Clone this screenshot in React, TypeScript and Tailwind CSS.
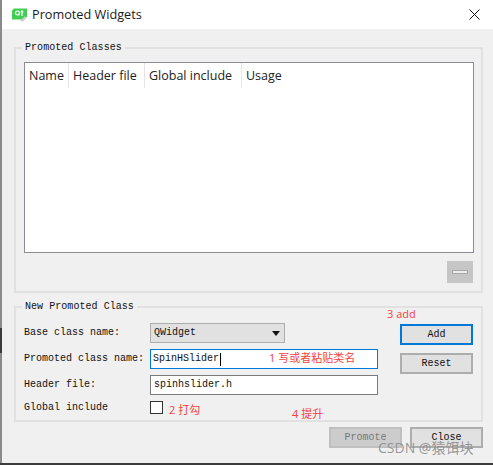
const mono = "font-['Liberation_Mono',monospace] text-[10px] leading-none text-[#111]";
const ui = "font-['Open_Sans','Noto_Sans_CJK_SC',sans-serif]";
const note = `${ui} absolute whitespace-nowrap text-[11px] leading-none text-[#f43f3f]`;

const labelClass = `${mono} w-[126px] shrink-0 text-[10px]`;

function Group({
  title,
  className,
  children,
}: {
  title: string;
  className: string;
  children: React.ReactNode;
}) {
  return (
    <fieldset className={`ml-[14px] mr-[10px] border-2 border-[#e1e1e1] ${className}`}>
      <legend className={`${mono} -ml-[2px] px-[3px] text-[10px] tracking-[0.05px]`}>{title}</legend>
      {children}
    </fieldset>
  );
}

function Button({ children, className }: { children: React.ReactNode; className: string }) {
  return (
    <button
      type="button"
      className={`${mono} flex w-[73px] items-center justify-center border-2 bg-[#e1e1e1] ${className}`}
    >
      {children}
    </button>
  );
}

export default function App() {
  const cols = [
    ["Name", "w-[44px]"],
    ["Header file", "w-[76px]"],
    ["Global include", "w-[97px]"],
  ];
  return (
    <div className="relative h-[465px] w-[493px] overflow-hidden bg-white">
      {/* window edge */}
      <div className="absolute left-0 top-0 h-[463px] w-[2px] bg-[#8a8a8a]" />
      <div className="absolute left-0 top-[328px] h-[25px] w-[2px] bg-[#3a3a3a]" />
      <div className="absolute bottom-0 left-0 h-[2px] w-full bg-[#3c3c3c]" />

      <header className="flex h-[29px] items-center pl-[12px] pr-[12px]">
        <svg width="15" height="15" viewBox="0 0 15 15" className="shrink-0">
          <path d="M2 1.500h13v8l-3 3H0V3.500z" fill="#41cd52" />
          <path d="M8 14l5-5 1 2-3 3.500z" fill="#c9c9c9" />
          <circle cx="5.500" cy="6" r="2" fill="none" stroke="#fff" strokeWidth="1.200" />
          <path d="M10 3v6M8.500 5h3" stroke="#fff" strokeWidth="1.200" />
        </svg>
        <span className={`${ui} ml-[5px] text-[12.700px] leading-none text-[#1a1a1a]`}>Promoted Widgets</span>
        <svg width="11" height="11" viewBox="0 0 11 11" className="ml-auto mr-[1px]">
          <path d="M0.500 0.500l10 10M10.500 0.500l-10 10" stroke="#111" strokeWidth="1" />
        </svg>
      </header>

      <main className="ml-[2px] h-[434px] bg-[#f0f0f0] pt-[14px]">
        <div className="-ml-[2px]">
          <Group title="Promoted Classes" className="h-[250px] pl-[8px] pr-[7px] pt-[9px]">
            <div className="h-[191px] border border-[#8a8d96] bg-white">
              <div className="flex h-[25px]">
                {cols.map(([name, width]) => (
                  <div
                    key={name}
                    className={`${ui} ${width} border-r border-[#e5e5e5] pl-[4px] text-[12.500px] leading-[25px] text-[#222]`}
                  >
                    {name}
                  </div>
                ))}
                <div className={`${ui} pl-[4px] text-[12.500px] leading-[25px] text-[#222]`}>Usage</div>
              </div>
            </div>
            <div className="mt-[8px] flex justify-end pr-[1px]">
              <div className="flex h-[22px] w-[26px] items-center justify-center bg-[#c6c6c6]">
                <div className="h-[4px] w-[16px] border border-[#a9a9a9] bg-[#ececec]" />
              </div>
            </div>
          </Group>

          <Group title="New Promoted Class" className="mt-[9px] h-[120px] pl-[8px] pr-[8px] pt-[11px]">
            <div className="flex">
              <div className="w-[354px]">
                <div className="flex h-[20px] items-center">
                  <span className={labelClass}>Base class name:</span>
                  <div className={`${mono} flex h-[20px] w-[135px] items-center justify-between border border-[#adadad] bg-[#e1e1e1] pl-[3px] pr-[3px]`}>
                    QWidget
                    <svg width="8" height="5" viewBox="0 0 8 5" className="mr-[1px]">
                      <path d="M0 0h8L4 5z" fill="#111" />
                    </svg>
                  </div>
                </div>
                <div className="mt-[6px] flex h-[20px] items-center">
                  <span className={labelClass}>Promoted class name:</span>
                  <div className={`${mono} flex h-[20px] w-[228px] items-center border border-[#0078d7] bg-white pl-[2px]`}>
                    SpinHSlider
                    <span className="ml-[1px] h-[13px] w-px bg-black" />
                  </div>
                </div>
                <div className="mt-[6px] flex h-[20px] items-center">
                  <span className={labelClass}>Header file:</span>
                  <div className={`${mono} flex h-[20px] w-[228px] items-center border border-[#7a7a7a] bg-white pl-[3px]`}>
                    spinhslider.h
                  </div>
                </div>
                <div className="mt-[6px] flex h-[13px] items-center">
                  <span className={labelClass}>Global include</span>
                  <span className="h-[13px] w-[13px] border border-[#333] bg-white" />
                </div>
              </div>
              <div className="ml-[22px] flex flex-col gap-[8px] pt-[1px]">
                <Button className="h-[21px] border-[#0078d7]">Add</Button>
                <Button className="h-[21px] border-[#adadad]">Reset</Button>
              </div>
            </div>
          </Group>

          <div className="mr-[10px] mt-[5px] flex justify-end gap-[8px]">
            <Button className="h-[21px] border-[#bfbfbf] !bg-[#cccccc] !text-[#787878]">Promote</Button>
            <Button className="h-[21px] border-[#adadad]">Close</Button>
          </div>
        </div>
      </main>

      {/* annotations added on top of the screenshot */}
      <span className={`${note} left-[387px] top-[308px]`}>3 add</span>
      <span className={`${note} left-[269px] top-[352px]`}>1 写或者粘贴类名</span>
      <span className={`${note} left-[169px] top-[404px]`}>2 打勾</span>
      <span className={`${note} left-[292px] top-[408px]`}>4 提升</span>
      <span className={`${ui} absolute left-[378px] top-[441px] whitespace-nowrap text-[14px] leading-none text-[#8c8c8c]/90`}>
        CSDN @猿饵块
      </span>
    </div>
  );
}
